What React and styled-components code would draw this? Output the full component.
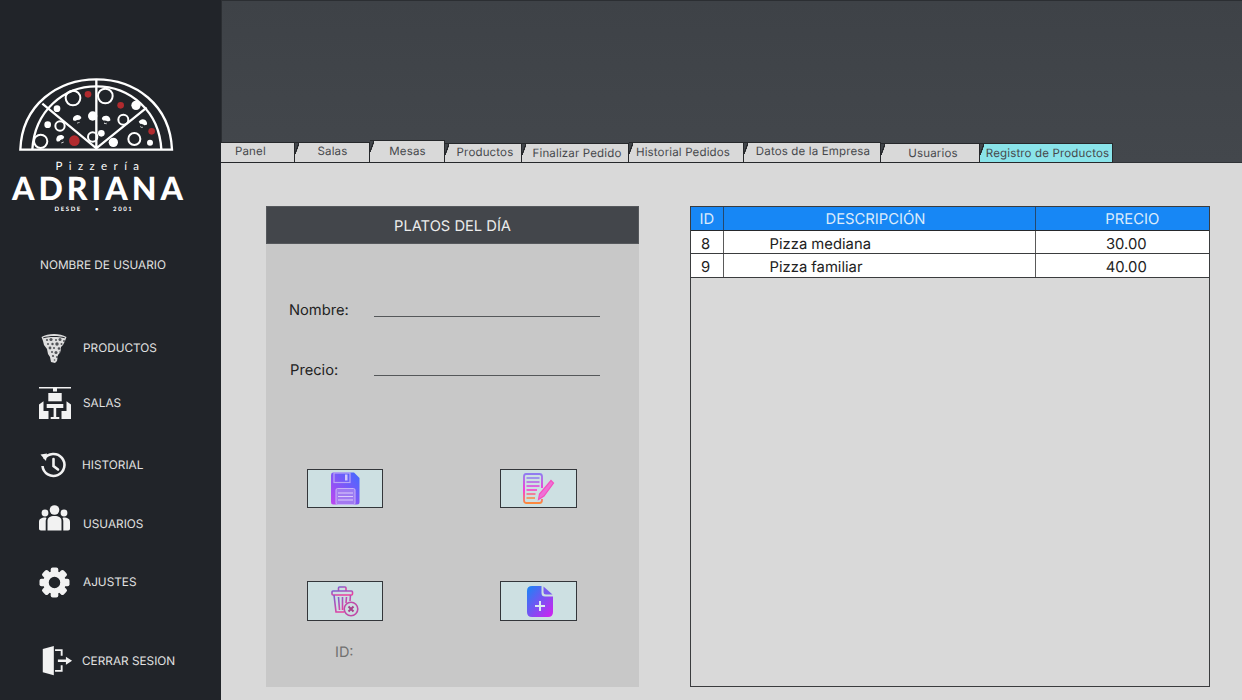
import React from "react";
import styled, { createGlobalStyle } from "styled-components";

const GlobalStyle = createGlobalStyle`
  html, body {
    margin: 0;
    padding: 0;
    background: #d9d9d9;
  }
  body {
    font-family: Inter, "Liberation Sans", sans-serif;
    text-rendering: geometricPrecision;
  }
`;

const Page = styled.div`
  display: flex;
  width: 1242px;
  height: 700px;
  overflow: hidden;
`;

const Sidebar = styled.aside`
  width: 221px;
  flex: none;
  display: flex;
  flex-direction: column;
  background: #212429;
  color: #e2e2e2;
  padding-top: 76px;
  box-sizing: border-box;
`;

const Logo = styled.div`
  display: flex;
  flex-direction: column;
  align-items: center;
  width: 191px;
  color: #fff;
`;

const LogoSmall = styled.div`
  margin-top: 9px;
  font-family: Lato, sans-serif;
  font-size: 11.5px;
  line-height: 12px;
  letter-spacing: 6.4px;
  padding-left: 10px;
`;

const LogoName = styled.div`
  margin-top: 3px;
  font-family: Lato, sans-serif;
  font-weight: 900;
  font-size: 32px;
  line-height: 24px;
  letter-spacing: 4px;
  padding-left: 8px;
`;

const LogoSince = styled.div`
  margin-top: 6px;
  font-family: Lato, sans-serif;
  font-weight: 700;
  font-size: 6px;
  line-height: 8px;
  letter-spacing: 1.6px;
  word-spacing: 10px;
  padding-right: 3px;
`;

const UserName = styled.div`
  margin: 44px 0 0 40px;
  font-size: 11.8px;
  line-height: 15px;
`;

const NavList = styled.nav`
  display: flex;
  flex-direction: column;
  margin-top: 57px;
`;

const NavItem = styled.div`
  display: grid;
  grid-template-columns: 34px auto;
  column-gap: ${({ $gap }) => $gap ?? 10}px;
  align-items: center;
  height: 36px;
  margin-top: ${({ $top }) => $top ?? 0}px;
  padding-left: 39px;
  font-size: 11.8px;
`;

const NavIcon = styled.span`
  display: flex;
  padding-bottom: ${({ $lift }) => $lift ?? 0}px;
`;

const Main = styled.main`
  flex: 1;
  display: flex;
  flex-direction: column;
  min-width: 0;
`;

const Header = styled.header`
  height: 163px;
  flex: none;
  box-sizing: border-box;
  display: flex;
  align-items: flex-end;
  background: linear-gradient(#3e4247, #43474c);
  border-top: 1px solid #2b2e32;
  border-left: 1px solid #2b2e32;
  border-bottom: 1px solid #2f3236;
`;

const TabBar = styled.div`
  display: flex;
  align-items: flex-end;
  height: 23px;
  margin: 0 0 -1px -1px;
`;

const Tab = styled.div`
  position: relative;
  box-sizing: border-box;
  width: ${({ $w }) => $w}px;
  height: ${({ $h }) => $h}px;
  display: flex;
  align-items: center;
  justify-content: ${({ $first }) => ($first ? "flex-start" : "center")};
  padding-bottom: ${({ $pb }) => $pb ?? 0}px;
  padding-left: ${({ $shift }) => Math.max($shift ?? 0, 0)}px;
  padding-right: ${({ $shift }) => Math.max(-($shift ?? 0), 0)}px;
  background: ${({ $active }) => ($active ? "#8ae4ea" : "#d9d9d9")};
  border-top: 1px solid #26282b;
  border-right: 1.5px solid #26282b;
  border-bottom: 1px solid #26282b;
  font-size: 11.5px;
  letter-spacing: 0.15px;
  color: #46484c;
  white-space: nowrap;

  ${({ $first }) =>
    !$first &&
    `&::before {
      content: "";
      position: absolute;
      left: 0;
      top: 0;
      width: 4px;
      height: 11px;
      background: linear-gradient(to top left, transparent 38%, #26282b 44%, #26282b 56%, #41454a 62%);
    }`}
`;

const Content = styled.section`
  flex: 1;
  display: flex;
  gap: 51px;
  padding: 43px 32px 13px 45px;
  background: #d9d9d9;
  min-height: 0;
`;

const Panel = styled.div`
  width: 373px;
  height: 481px;
  flex: none;
  display: flex;
  flex-direction: column;
  background: #c8c8c8;
`;

const PanelTitle = styled.div`
  height: 38px;
  flex: none;
  box-sizing: border-box;
  display: flex;
  align-items: center;
  justify-content: center;
  background: #43464b;
  border: 1px solid #55585c;
  color: #ececec;
  font-size: 14.7px;
  padding-top: 1px;
`;

const FormRows = styled.div`
  display: flex;
  flex-direction: column;
  gap: 40px;
  margin-top: 56px;
`;

const Field = styled.label`
  display: grid;
  grid-template-columns: 85px 226px;
  height: 20px;
  align-items: end;
  padding-left: 23px;
  font-size: 14.7px;
  line-height: 20px;
  color: #222;
`;

const FieldLabel = styled.span`
  padding-left: ${({ $indent }) => $indent ?? 0}px;
`;

const FieldLine = styled.span`
  display: block;
  height: 1px;
  background: #55585a;
  margin-bottom: ${({ $lift }) => $lift}px;
`;

const ButtonGrid = styled.div`
  display: grid;
  grid-template-columns: 76px 77px;
  grid-template-rows: 39px 40px;
  column-gap: 117px;
  row-gap: 73px;
  margin-top: 89px;
  padding-left: 41px;
`;

const IconButton = styled.button`
  display: flex;
  align-items: center;
  justify-content: center;
  padding: 0;
  background: #cde0e2;
  border: 1.5px solid #33363a;
`;

const IdLabel = styled.div`
  margin: 23px 0 0 69px;
  font-size: 14.5px;
  line-height: 18px;
  color: #707070;
`;

const TableBox = styled.div`
  width: 520px;
  height: 481px;
  box-sizing: border-box;
  flex: none;
  border: 1px solid #3a3c3e;
`;

const Table = styled.table`
  width: 100%;
  table-layout: fixed;
  border-collapse: collapse;
  font-size: 14.8px;
`;

const HeadCell = styled.th`
  height: 23px;
  padding: 0 ${({ $pr }) => $pr ?? 0}px 0 ${({ $pl }) => $pl ?? 0}px;
  background: #1787f5;
  color: #dcebfb;
  font-weight: 400;
  text-align: center;
  border-right: 1px solid #24486e;
  border-bottom: 1px solid #26282b;
  &:last-child {
    border-right: 0;
  }
`;

const Row = styled.tr`
  background: #fff;
`;

const Cell = styled.td`
  height: ${({ $h }) => $h}px;
  padding: 4px 0 0 ${({ $pad }) => $pad ?? 0}px;
  box-sizing: border-box;
  line-height: 18px;
  vertical-align: top;
  color: #222;
  text-align: ${({ $center }) => ($center ? "center" : "left")};
  border-right: 1px solid #5a5a5a;
  border-bottom: 1px solid #3a3c3e;
  &:last-child {
    border-right: 0;
  }
`;

const Mushroom = ({ x, y, r = 0 }) => (
  <g transform={`translate(${x} ${y}) rotate(${r})`}>
    <path d="M-13 -1 A13 12 0 0 1 13 -1 Q7 4 2 3 L4 12 L-4 12 L-2 3 Q-8 4 -13 -1Z" fill="#fff" />
    <path d="M-4 2 L4 2 L3 10 L-3 10Z" fill="#212429" />
  </g>
);

const LogoMark = () => (
  <svg width="156" height="76" viewBox="54 45 468 228">
    <g fill="none" stroke="#fff" strokeWidth="7">
      <path d="M61 266 C66 130 175 55 289 55 C405 55 510 130 516 266Z" />
      <path d="M97 266 C104 150 190 76 289 76 C390 76 478 150 484 266" />
      <path d="M289 55 V266 M127 128 L289 262 L440 140" />
      <g strokeWidth="6">
        <circle cx="219" cy="111" r="22" />
        <circle cx="316" cy="105" r="22" />
        <circle cx="370" cy="176" r="15" />
        <circle cx="180" cy="195" r="14" />
        <circle cx="122" cy="241" r="20" />
        <circle cx="278" cy="228" r="14" />
        <circle cx="403" cy="234" r="18" />
      </g>
    </g>
    <g fill="#fff">
      <circle cx="408" cy="133" r="14" />
      <circle cx="171" cy="143" r="10" />
      <circle cx="278" cy="165" r="14" />
      <circle cx="143" cy="191" r="10" />
      <circle cx="304" cy="217" r="10" />
      <circle cx="340" cy="244" r="14" />
      <circle cx="450" cy="245" r="9" />
    </g>
    <g fill="#b02a2e">
      <circle cx="264" cy="100" r="10" />
      <circle cx="362" cy="133" r="10" />
      <circle cx="455" cy="211" r="10" />
      <circle cx="223" cy="239" r="16" />
    </g>
    <Mushroom x={232} y={175} r={-15} />
    <Mushroom x={318} y={177} r={10} />
    <Mushroom x={428} y={188} r={20} />
    <Mushroom x={182} y={235} r={-30} />
  </svg>
);

const PIZZA_HOLES = [
  [6, 7, 1.1], [10, 6.5, 1.6], [15, 7, 1], [19, 6.5, 1.5], [23, 8, 1],
  [7, 11, 1], [11.5, 11, 1.2], [16, 11, 1.7], [20.5, 11, 1],
  [9, 15, 1.4], [13, 15, 1], [18, 15.5, 1.3], [11, 19, 1],
  [15, 19.5, 1.5], [19, 19, 0.8], [12, 23, 1.1], [16, 24, 1], [13.5, 27, 0.8],
];

const PizzaIcon = () => (
  <svg width="28" height="30" viewBox="-2 0 28 30" fill="#dedede">
    <path d="M0.5 4 C7 0 19 0 25.5 4 L24 8 L22 12 L20 14 L19.5 19 L17 22 L16 28 L14 30 L10 29 L9 24 L7 21 L6 16 L3 12 L2 8Z" />
    <path d="M2 4.5 C8 2.5 18 2.5 24 4.5 L23.7 5.3 C18 3.6 8 3.6 2.3 5.3Z" fill="#212429" />
    {PIZZA_HOLES.map(([cx, cy, r]) => (
      <circle key={`${cx}-${cy}`} cx={cx} cy={cy} r={r} fill="#212429" opacity="0.75" />
    ))}
  </svg>
);

const SalasIcon = () => (
  <svg width="33" height="33" viewBox="0 0 33 33" fill="#f2f2f2">
    <path d="M0 0 H32 V1.6 H18 V4.5 H14 V1.6 H0Z" />
    <rect x="9.3" y="6" width="13.4" height="8.3" />
    <rect x="7.7" y="17" width="16.6" height="4" />
    <rect x="14.6" y="21" width="2.6" height="10" />
    <rect x="11.7" y="30" width="8.6" height="2" />
    <path d="M0 17.5 L4.5 14.3 V24 H9.5 V32 H0Z" />
    <path d="M32 17.5 L27.5 14.3 V24 H22.5 V32 H32Z" />
  </svg>
);

const HistoryIcon = () => (
  <svg width="28" height="28" viewBox="0 0 28 28" fill="none" stroke="#f2f2f2" strokeWidth="2.6">
    <path d="M5.2 8 A11 11 0 1 1 3.5 15" />
    <path d="M1.5 3.5 L8 2.5 L7 10Z" fill="#f2f2f2" stroke="none" />
    <path d="M14.5 8 V15 L19 18.5" strokeLinecap="round" />
  </svg>
);

const UsersIcon = () => (
  <svg width="31" height="26" viewBox="0 0 31 26" fill="#f2f2f2">
    <circle cx="15.5" cy="5" r="4.8" />
    <circle cx="6" cy="8" r="3.4" />
    <circle cx="25" cy="8" r="3.4" />
    <path d="M8.5 25.5 V16 C8.5 12.5 11 11 15.5 11 C20 11 22.5 12.5 22.5 16 V25.5Z" />
    <path d="M6.7 25.5 H2 C0.6 25.5 0 24.5 0 23.5 V17 C0 14 2 12.5 6.5 12.5 L7.5 13 C7 14 6.7 15 6.7 16Z" />
    <path d="M24.3 25.5 H29 C30.4 25.5 31 24.5 31 23.5 V17 C31 14 29 12.5 24.5 12.5 L23.5 13 C24 14 24.3 15 24.3 16Z" />
  </svg>
);

const GEAR_TEETH = [0, 45, 90, 135, 180, 225, 270, 315];

const GearIcon = () => (
  <svg width="31" height="31" viewBox="0 0 31 31">
    {GEAR_TEETH.map((angle) => (
      <rect
        key={angle}
        x="11.7"
        y="0.5"
        width="7.6"
        height="8"
        rx="2"
        fill="#f2f2f2"
        transform={`rotate(${angle} 15.5 15.5)`}
      />
    ))}
    <circle cx="15.5" cy="15.5" r="8.5" fill="none" stroke="#f2f2f2" strokeWidth="5.5" />
  </svg>
);

const DoorIcon = () => (
  <svg width="36" height="32" viewBox="-4 0 36 32" fill="#f2f2f2">
    <path d="M0 3.3 L11.7 0 V31 L0 28Z" />
    <path d="M13 3.5 H21 V10.5 H19 V5.5 H13Z" />
    <path d="M13 27.5 H21 V20.5 H19 V25.5 H13Z" />
    <path d="M16 14.4 H24.5 V11.5 L31 15.7 L24.5 20 V17 H16Z" />
  </svg>
);

const FloppyIcon = () => (
  <svg width="29" height="33" viewBox="0 0 29 33">
    <defs>
      <linearGradient id="floppy" x1="1" y1="0" x2="0" y2="1">
        <stop offset="0" stopColor="#3f6bff" />
        <stop offset="1" stopColor="#bf45f0" />
      </linearGradient>
    </defs>
    <path d="M2 0.5 H23 L28.5 6 V30 Q28.5 32.5 26 32.5 H2 Q0 32.5 0 30 V3 Q0 0.5 2 0.5Z" fill="url(#floppy)" />
    <rect x="3" y="1" width="16" height="9.5" fill="none" stroke="#b9a6f5" strokeWidth="1.2" />
    <rect x="14" y="2.5" width="2.5" height="6" fill="#d3c6fa" />
    <rect x="5" y="16.5" width="19" height="16" rx="1.5" fill="#a583f0" fillOpacity="0.8" stroke="#c7b2f7" strokeWidth="1" />
    <g stroke="#dccdfb" strokeWidth="1">
      <path d="M7 21 H22 M7 24.5 H22 M7 28 H22" />
    </g>
  </svg>
);

const NotesIcon = () => (
  <svg width="33" height="31" viewBox="-1 0 33 31">
    <defs>
      <linearGradient id="notes" x1="0" y1="0" x2="0" y2="1">
        <stop offset="0" stopColor="#8f7cf0" />
        <stop offset="0.55" stopColor="#fb2bd6" />
        <stop offset="1" stopColor="#fb8a3c" />
      </linearGradient>
    </defs>
    <path
      d="M19 26 V27 Q19 30 16.5 30 H3 Q1 30 1 27 V3.5 Q1 1 3 1 H16.5 Q19 1 19 3.5 V15"
      fill="none"
      stroke="url(#notes)"
      strokeWidth="1.8"
    />
    <path d="M3.5 5 H16.5 M3.5 9 H16.5 M3.5 13 H16.5 M3.5 17 H14 M3.5 21 H12.5 M3.5 25 H12" stroke="url(#notes)" strokeWidth="1.6" />
    <path d="M28 7.5 L30.5 10 L21 23 L15.5 26.5 L16.5 21Z" fill="#ef70d6" stroke="#f54fc0" strokeWidth="1.2" />
  </svg>
);

const TrashIcon = () => (
  <svg width="28" height="31" viewBox="0 0 28 31">
    <defs>
      <linearGradient id="trash" x1="0" y1="0" x2="0.6" y2="1">
        <stop offset="0" stopColor="#7a5fd0" />
        <stop offset="1" stopColor="#ee3f9d" />
      </linearGradient>
    </defs>
    <g fill="none" stroke="url(#trash)" strokeWidth="1.6">
      <path d="M7.5 5 V2 Q7.5 1 8.5 1 H14 Q15 1 15 2 V5" />
      <rect x="1" y="5" width="20.5" height="4" rx="1" />
      <path d="M3 9 L5 26 H13 M19.5 9 L19 15" />
      <path d="M7.5 11 L8.5 24 M11.5 11 V24 M15.5 11 L15 17" />
    </g>
    <circle cx="20" cy="23" r="6.8" fill="#cde0e2" stroke="#c04aa8" strokeWidth="1.6" />
    <path d="M17.5 20.5 L22.5 25.5 M22.5 20.5 L17.5 25.5" stroke="#a8408c" strokeWidth="2" />
  </svg>
);

const NewDocIcon = () => (
  <svg width="28" height="31" viewBox="-2 0 28 31">
    <defs>
      <linearGradient id="newdoc" x1="0" y1="0" x2="1" y2="1">
        <stop offset="0" stopColor="#1787f5" />
        <stop offset="1" stopColor="#d61ff0" />
      </linearGradient>
    </defs>
    <path
      d="M5 0 H14.5 V7 Q14.5 10.5 18 10.5 H26 V26 Q26 31 21 31 H5 Q0 31 0 26 V5 Q0 0 5 0Z"
      fill="url(#newdoc)"
    />
    <path d="M16.5 0.5 L25.5 8.5 H19 Q16.5 8.5 16.5 6Z" fill="#7a5cf0" />
    <path d="M13 15 V25 M8 20 H18" stroke="#dbeaf0" strokeWidth="2" />
  </svg>
);

const NAV_ITEMS = [
  { label: "PRODUCTOS", icon: <PizzaIcon />, top: 0 },
  { label: "SALAS", icon: <SalasIcon />, top: 19 },
  { label: "HISTORIAL", icon: <HistoryIcon />, top: 26, gap: 9 },
  { label: "USUARIOS", icon: <UsersIcon />, top: 22, lift: 11 },
  { label: "AJUSTES", icon: <GearIcon />, top: 23 },
  { label: "CERRAR SESION", icon: <DoorIcon />, top: 43, gap: 9 },
];

const TABS = [
  { label: "Panel", w: 74, h: 21, first: true, shift: 14, pb: 3 },
  { label: "Salas", w: 75, h: 21, shift: 1, pb: 3 },
  { label: "Mesas", w: 75, h: 23, shift: 1, pb: 2 },
  { label: "Productos", w: 77, h: 20, shift: 4, pb: 2 },
  { label: "Finalizar Pedido", w: 107, h: 20, shift: 4 },
  { label: "Historial Pedidos", w: 115, h: 21, shift: -6, pb: 1 },
  { label: "Datos de la Empresa", w: 137, h: 21, shift: 2, pb: 3 },
  { label: "Usuarios", w: 99, h: 20, shift: 6 },
  { label: "Registro de Productos", w: 133, h: 20, shift: 3, active: true },
];

const ROWS = [
  { id: 8, name: "Pizza mediana", price: "30.00", h: 23 },
  { id: 9, name: "Pizza familiar", price: "40.00", h: 24 },
];

export default function App() {
  return (
    <Page>
      <GlobalStyle />
      <Sidebar>
        <Logo>
          <LogoMark />
          <LogoSmall>Pizzería</LogoSmall>
          <LogoName>ADRIANA</LogoName>
          <LogoSince>DESDE • 2001</LogoSince>
        </Logo>
        <UserName>NOMBRE DE USUARIO</UserName>
        <NavList>
          {NAV_ITEMS.map((item) => (
            <NavItem key={item.label} $top={item.top} $gap={item.gap}>
              <NavIcon $lift={item.lift}>{item.icon}</NavIcon>
              <span>{item.label}</span>
            </NavItem>
          ))}
        </NavList>
      </Sidebar>
      <Main>
        <Header>
          <TabBar>
            {TABS.map((tab) => (
              <Tab
                key={tab.label}
                $w={tab.w}
                $h={tab.h}
                $pb={tab.pb}
                $shift={tab.shift}
                $first={tab.first}
                $active={tab.active}
              >
                {tab.label}
              </Tab>
            ))}
          </TabBar>
        </Header>
        <Content>
          <Panel>
            <PanelTitle>PLATOS DEL DÍA</PanelTitle>
            <FormRows>
              <Field>
                <FieldLabel>Nombre:</FieldLabel>
                <FieldLine $lift={3} />
              </Field>
              <Field>
                <FieldLabel $indent={1}>Precio:</FieldLabel>
                <FieldLine $lift={4} />
              </Field>
            </FormRows>
            <ButtonGrid>
              <IconButton>
                <FloppyIcon />
              </IconButton>
              <IconButton>
                <NotesIcon />
              </IconButton>
              <IconButton>
                <TrashIcon />
              </IconButton>
              <IconButton>
                <NewDocIcon />
              </IconButton>
            </ButtonGrid>
            <IdLabel>ID:</IdLabel>
          </Panel>
          <TableBox>
            <Table>
              <colgroup>
                <col width="32" />
                <col width="312" />
                <col width="174" />
              </colgroup>
              <thead>
                <tr>
                  <HeadCell>ID</HeadCell>
                  <HeadCell $pr={7}>DESCRIPCIÓN</HeadCell>
                  <HeadCell $pl={20}>PRECIO</HeadCell>
                </tr>
              </thead>
              <tbody>
                {ROWS.map((row) => (
                  <Row key={row.id}>
                    <Cell $h={row.h} $pad={10}>{row.id}</Cell>
                    <Cell $h={row.h} $pad={46}>{row.name}</Cell>
                    <Cell $h={row.h} $center $pad={8}>{row.price}</Cell>
                  </Row>
                ))}
              </tbody>
            </Table>
          </TableBox>
        </Content>
      </Main>
    </Page>
  );
}
